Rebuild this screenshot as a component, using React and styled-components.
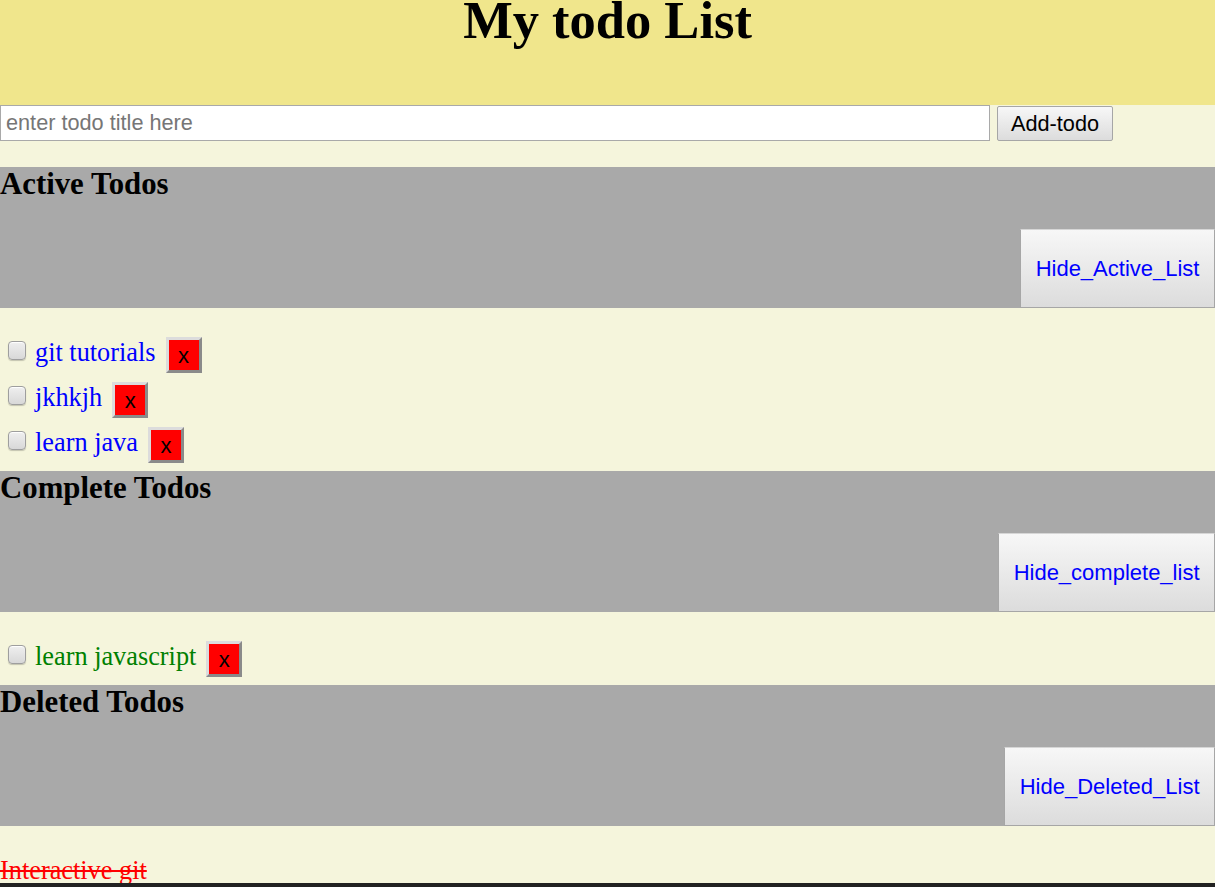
import React from 'react';
import styled, { createGlobalStyle } from 'styled-components';

const GlobalStyle = createGlobalStyle`
  html, body {
    margin: 0;
    padding: 0;
    background: #f5f5dc;
  }
  body {
    font-family: "Liberation Serif", "Times New Roman", serif;
  }
`;

const Page = styled.div`
  min-height: 887px;
  background: #f5f5dc;
`;

const Header = styled.header`
  height: 105px;
  background: #f0e68c;

  h1 {
    margin: 0;
    font-size: 52.5px;
    line-height: 40px;
    text-align: center;
    font-weight: bold;
  }
`;

const AddRow = styled.div`
  display: flex;
  align-items: flex-start;
  gap: 7px;
  height: 62px;
`;

const TitleInput = styled.input`
  box-sizing: border-box;
  width: 990px;
  height: 36px;
  margin: 0;
  padding: 0 5px;
  border: 1px solid #a9a9a9;
  background: #fff;
  font-family: "Liberation Sans", Arial, sans-serif;
  font-size: 21.7px;
  outline: none;

  &::placeholder {
    color: #767676;
  }
`;

const GreyButton = styled.button`
  box-sizing: border-box;
  margin: 0;
  padding: 0 13px;
  border: 1px solid #a6a6a6;
  border-radius: 2px;
  background: linear-gradient(#f7f7f7, #dcdcdc);
  font-family: "Liberation Sans", Arial, sans-serif;
  font-size: 21.7px;
  color: ${(p) => p.$color || '#000'};
  cursor: pointer;
`;

const AddButton = styled(GreyButton)`
  height: 35px;
  margin-top: 1px;
`;

const SectionBar = styled.section`
  display: flex;
  flex-direction: column;
  height: 141px;
  background: #a9a9a9;

  h3 {
    margin: 0 0 28px;
    font-size: 30.8px;
    line-height: 34px;
    font-weight: bold;
    white-space: nowrap;
  }
`;

const BarActions = styled.div`
  display: flex;
  justify-content: flex-end;
`;

const HideButton = styled(GreyButton)`
  height: 79px;
  padding: 0 14.5px;
  border-radius: 0;
  border-top-color: #d6d6d6;
  font-size: 22px;
`;

const List = styled.ul`
  list-style: none;
  margin: 0;
  padding: ${(p) => p.$padding || '29px 0 9px'};
  display: flex;
  flex-direction: column;
  gap: 10px;
`;

const Item = styled.li`
  display: flex;
  align-items: center;
  height: 35px;
`;

const Check = styled.span`
  box-sizing: border-box;
  align-self: flex-start;
  width: 18px;
  height: 19px;
  margin: 4px 9px 0 8px;
  border: 1px solid #9e9e9e;
  border-radius: 4px;
  background: linear-gradient(#efefef, #d8d8d8);
  box-shadow: inset 0 1px 1px #fff, 0 1px 1px rgba(0, 0, 0, 0.2);
`;

const ItemText = styled.span`
  margin-bottom: 3px;
  font-size: 26.3px;
  line-height: 30px;
  color: ${(p) => p.$color};
  text-decoration: ${(p) => (p.$struck ? 'line-through' : 'none')};
  white-space: nowrap;
`;

const RemoveButton = styled.button`
  box-sizing: border-box;
  width: 36px;
  height: 36px;
  margin: 0 0 0 10px;
  padding: 3px 0 0;
  border: 3px solid;
  border-color: #dcdcdc #8a8a8a #8a8a8a #dcdcdc;
  background: #ff0000;
  font-family: "Liberation Sans", Arial, sans-serif;
  font-size: 22px;
  color: #000;
  cursor: pointer;
`;

const TaskStrip = styled.div`
  position: fixed;
  left: 0;
  right: 0;
  bottom: 0;
  height: 4px;
  background: #222;
`;

const active = ['git tutorials', 'jkhkjh', 'learn java'];
const complete = ['learn javascript'];
const deleted = ['Interactive git'];

function TodoItem({ title, color }) {
  return (
    <Item>
      <Check />
      <ItemText $color={color}>{title}</ItemText>
      <RemoveButton>x</RemoveButton>
    </Item>
  );
}

function Section({ title, hideLabel }) {
  return (
    <SectionBar>
      <h3>{title}</h3>
      <BarActions>
        <HideButton $color="#0000ff">{hideLabel}</HideButton>
      </BarActions>
    </SectionBar>
  );
}

export default function App() {
  return (
    <Page>
      <GlobalStyle />
      <Header>
        <h1>My todo List</h1>
      </Header>
      <AddRow>
        <TitleInput placeholder="enter todo title here" />
        <AddButton>Add-todo</AddButton>
      </AddRow>

      <Section title="Active Todos" hideLabel="Hide_Active_List" />
      <List>
        {active.map((t) => (
          <TodoItem key={t} title={t} color="#0000ff" />
        ))}
      </List>

      <Section title="Complete Todos" hideLabel="Hide_complete_list" />
      <List>
        {complete.map((t) => (
          <TodoItem key={t} title={t} color="#008000" />
        ))}
      </List>

      <Section title="Deleted Todos" hideLabel="Hide_Deleted_List" />
      <List $padding="30px 0 0">
        {deleted.map((t) => (
          <li key={t}>
            <ItemText $color="#ff0000" $struck>
              {t}
            </ItemText>
          </li>
        ))}
      </List>
      <TaskStrip />
    </Page>
  );
}
